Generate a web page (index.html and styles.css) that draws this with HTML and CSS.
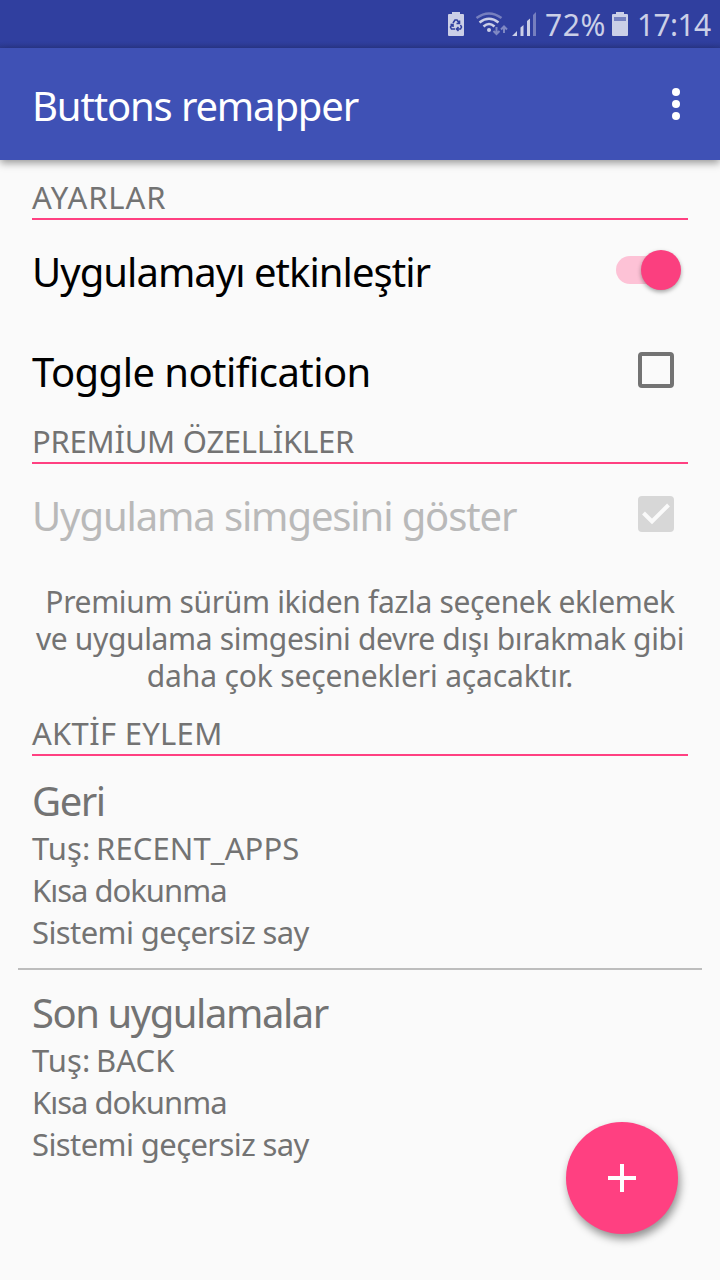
FILE: index.html
```html
<!DOCTYPE html>
<html lang="tr">
<head>
    <meta charset="UTF-8">
    <meta name="viewport" content="width=device-width, initial-scale=1.0">
    <title>Buttons remapper</title>
    <link rel="stylesheet" href="styles.css">
</head>
<body>
    <div class="status-bar">
        <svg class="status-icons" width="89" height="48" viewBox="0 0 89 48">
            <!-- battery saver -->
            <path class="icon-solid" d="M4 12h8v2h3q1 0 1 1v20q0 1-1 1H1q-1 0-1-1V15q0-1 1-1h3z"/>
            <g class="recycle">
                <path d="M5 23l2-3h2l2.500 3.500M11.500 20.500v3h-3"/>
                <path d="M12.500 25l1 2-1 2H9M10.500 27L8.500 29l2 2"/>
                <path d="M7 29H3.500l-1-2 2-3M2.500 24.500h2.500v2.500"/>
            </g>
            <!-- wifi -->
            <path class="wifi faded" d="M28.500 18q12.500-9 25 0"/>
            <path class="wifi" d="M31.500 22.500q9.500-7.500 19 0"/>
            <path class="wifi" d="M35.500 26.500q5.500-5 11 0"/>
            <circle class="icon-solid" cx="41" cy="30" r="2"/>
            <path class="arrows" d="M48.500 27v7M45.500 31l3 3 3-3M56 33v-6.500M53 29.500l3-3 3 3"/>
            <!-- signal -->
            <path class="icon-solid" d="M64 36l5-5v5zM72.500 27.500l3-2.500v11h-3zM79 21l3-2.500V36h-3z"/>
            <path class="icon-solid faded" d="M85 15l3-3v24h-3z"/>
        </svg>
        <span class="battery-level">72%</span>
        <svg class="battery" width="16" height="48" viewBox="0 0 16 48">
            <path class="icon-solid" d="M4 12h8v2h3q1 0 1 1v20q0 1-1 1H1q-1 0-1-1V15q0-1 1-1h3z"/>
            <path class="battery-empty" d="M2 17h12v4H2z"/>
        </svg>
        <span class="clock">17:14</span>
    </div>

    <header class="app-bar">
        <h1>Buttons remapper</h1>
        <button class="menu-button" aria-label="Menu">
            <span class="dot"></span>
            <span class="dot"></span>
            <span class="dot"></span>
        </button>
    </header>

    <main>
        <h2 class="wide">AYARLAR</h2>
        <div class="row">
            <span class="label-enable">Uygulamayı etkinleştir</span>
            <div class="switch"><div class="thumb"></div></div>
        </div>
        <div class="row">
            <span class="label-toggle">Toggle notification</span>
            <div class="checkbox"></div>
        </div>

        <h2 class="narrow">PREMİUM ÖZELLİKLER</h2>
        <div class="row disabled">
            <span class="label-icon">Uygulama simgesini göster</span>
            <div class="checkbox checked">
                <svg width="36" height="36" viewBox="0 0 36 36">
                    <path d="M5.500 17l8.500 8.500L30.500 9"/>
                </svg>
            </div>
        </div>
        <p class="premium-note">Premium sürüm ikiden fazla seçenek eklemek<br>ve uygulama simgesini devre dışı bırakmak gibi<br><span class="last-line">daha çok seçenekleri açacaktır.</span></p>

        <h2>AKTİF EYLEM</h2>
        <div class="action">
            <h3>Geri</h3>
            <p class="key">Tuş: RECENT_APPS</p>
            <p class="press">Kısa dokunma</p>
            <p class="override">Sistemi geçersiz say</p>
        </div>
        <div class="action">
            <h3>Son uygulamalar</h3>
            <p class="key">Tuş: BACK</p>
            <p class="press">Kısa dokunma</p>
            <p class="override">Sistemi geçersiz say</p>
        </div>
    </main>

    <button class="fab" aria-label="Ekle">
        <svg width="28" height="28" viewBox="0 0 28 28">
            <path d="M12 0h4v12h12v4H16v12h-4V16H0v-4h12z"/>
        </svg>
    </button>
</body>
</html>
```

FILE: styles.css
```css
:root {
    --primary: #3f51b5;
    --primary-dark: #303f9f;
    --accent: #ff4081;
    --background: #fafafa;
    --text-secondary: #737373;
    --status-color: #cbcfe7;
}

* {
    box-sizing: border-box;
}

body {
    margin: 0;
    height: 1280px;
    overflow: hidden;
    background: var(--background);
    font-family: "Noto Sans", sans-serif;
    color: #000;
}

h1, h2, h3, p {
    margin: 0;
    font-weight: 400;
}

button {
    padding: 0;
    border: none;
    background: none;
}

.status-bar {
    display: flex;
    height: 48px;
    padding-left: 448px;
    background: linear-gradient(var(--primary-dark) 42px, #2b3990);
    color: var(--status-color);
    font-size: 30px;
    line-height: 50px;
    white-space: nowrap;
}
.battery-level {
    width: 67px;
    margin-left: 8px;
    letter-spacing: 0.6px;
}
.clock {
    margin-left: 9px;
    letter-spacing: -0.6px;
}
.icon-solid {
    fill: var(--status-color);
}
.faded {
    opacity: 0.45;
}
.recycle path {
    fill: none;
    stroke: var(--primary-dark);
    stroke-width: 1.6;
}
.wifi {
    fill: none;
    stroke: var(--status-color);
    stroke-width: 2.5;
}
.arrows {
    fill: none;
    stroke: #7f88c3;
    stroke-width: 2;
}
.battery-empty {
    fill: #7580c0;
}

.app-bar {
    display: flex;
    justify-content: space-between;
    align-items: center;
    height: 112px;
    padding: 0 40px 0 32px;
    background: var(--primary);
    box-shadow: 0 3px 8px rgba(0, 0, 0, 0.4);
    color: #fff;
}
h1 {
    padding-top: 3px;
    font-size: 40px;
    line-height: 56px;
    letter-spacing: -1.15px;
}
.menu-button {
    display: flex;
    flex-direction: column;
    gap: 4px;
}
.dot {
    width: 8px;
    height: 8px;
    border-radius: 50%;
    background: #fff;
}

main {
    padding: 16px 32px 0;
}
h2 {
    height: 44px;
    border-bottom: 2px solid var(--accent);
    color: var(--text-secondary);
    font-size: 31px;
    line-height: 42px;
    letter-spacing: 0.3px;
}
.wide {
    letter-spacing: 0.9px;
}
.narrow {
    letter-spacing: -0.25px;
}

.row {
    display: flex;
    justify-content: space-between;
    align-items: center;
    height: 100px;
    padding-right: 14px;
    font-size: 40px;
    line-height: 56px;
    white-space: nowrap;
}
.row span {
    padding-top: 3px;
}
.label-enable {
    letter-spacing: -0.97px;
}
.label-toggle {
    letter-spacing: -0.55px;
}
.label-icon {
    letter-spacing: -1.12px;
}
.disabled {
    color: #b9b9b9;
}

.switch {
    display: flex;
    align-items: center;
    justify-content: flex-end;
    width: 65px;
    height: 28px;
    margin-right: -7px;
    border-radius: 14px;
    background: linear-gradient(to right, #fdc2d6 50px, transparent 50px);
}
.thumb {
    width: 40px;
    height: 40px;
    border-radius: 50%;
    background: #fb3f7f;
    box-shadow: 0 2px 4px rgba(0, 0, 0, 0.35);
}

.checkbox {
    width: 36px;
    height: 36px;
    border: 4px solid var(--text-secondary);
    border-radius: 4px;
}
.checkbox.checked {
    border: none;
    background: #d7d7d7;
}
.checkbox svg {
    display: block;
    fill: none;
    stroke: var(--background);
    stroke-width: 4;
}

.premium-note {
    margin: 19px -16px 18px;
    color: var(--text-secondary);
    font-size: 30px;
    line-height: 37px;
    letter-spacing: -0.35px;
    text-align: center;
    white-space: nowrap;
}
.last-line {
    letter-spacing: -0.15px;
}

.action {
    padding: 17px 0 15px;
    color: var(--text-secondary);
    font-size: 31px;
    line-height: 42px;
}
.action + .action {
    margin: 0 -14px;
    padding: 15px 14px 0;
    border-top: 2px solid #bdbdbd;
}
h3 {
    height: 54px;
    font-size: 40px;
    line-height: 56px;
    letter-spacing: -1.45px;
}
.key {
    letter-spacing: 0.1px;
    word-spacing: -2.5px;
}
.press {
    letter-spacing: -1px;
}
.override {
    letter-spacing: -0.6px;
}

.fab {
    position: absolute;
    left: 566px;
    top: 1122px;
    display: flex;
    align-items: center;
    justify-content: center;
    width: 112px;
    height: 112px;
    border-radius: 50%;
    background: var(--accent);
    box-shadow: 2px 5px 9px rgba(0, 0, 0, 0.42);
}
.fab path {
    fill: #fff;
}
```
